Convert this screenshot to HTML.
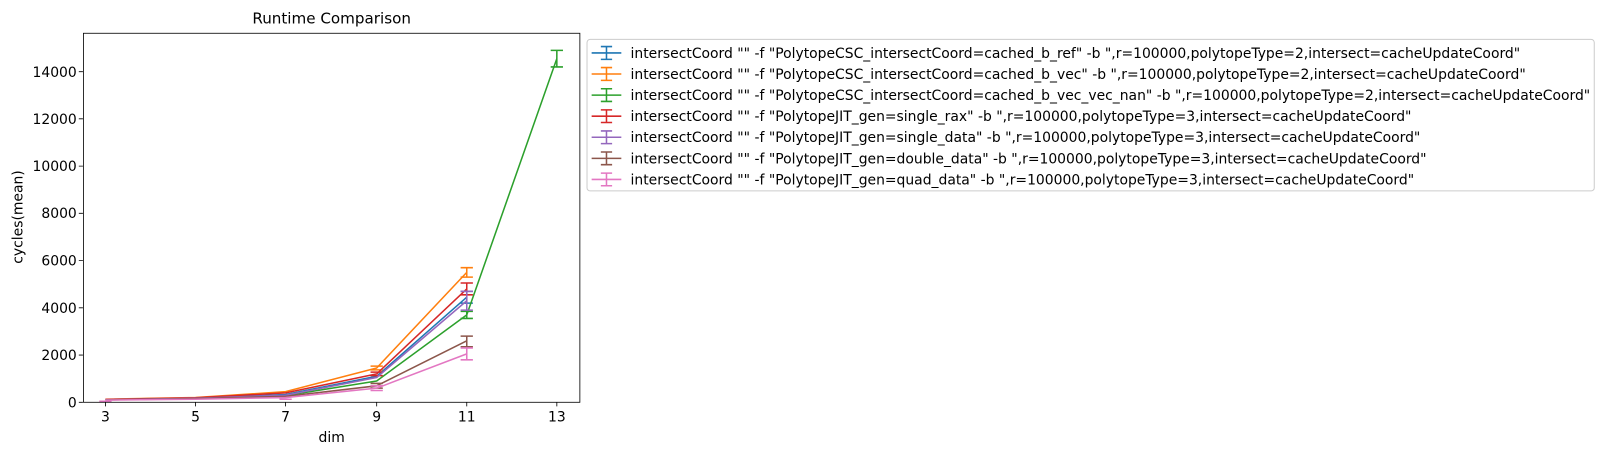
<!DOCTYPE html>
<html><head><meta charset="utf-8"><style>
html,body{margin:0;padding:0;background:#fff;}
svg{display:block;font-family:"DejaVu Sans","Liberation Sans",sans-serif;}
</style></head><body>
<svg width="1605" height="455" viewBox="0 0 1568 444.5" preserveAspectRatio="none" xmlns="http://www.w3.org/2000/svg">
<rect width="1568" height="444.5" fill="#fff"/>
<g fill="none" stroke-width="1.5" stroke-linejoin="round">
<polyline stroke="#1f77b4" points="103,390.2 191,388.8 279,385.4 368,367.6 456,290.3"/>
<path stroke="#1f77b4" d="M456,296.1V284.6M450,296.1H462M450,284.6H462"/>
<polyline stroke="#ff7f0e" points="103,390 191,388.4 279,382.6 368,359.5 456,266.1"/>
<path stroke="#ff7f0e" d="M456,270.7V261.5M450,270.7H462M450,261.5H462M362,361.3H374M362,357.7H374"/>
<polyline stroke="#2ca02c" points="103,390.5 191,389.5 279,386.5 368,372.2 456,307.6 544,57.3"/>
<path stroke="#2ca02c" d="M456,311.1V304.2M450,311.1H462M450,304.2H462M544,65.4V49.2M538,65.4H550M538,49.2H550"/>
<polyline stroke="#d62728" points="103,390.2 191,388.6 279,383.8 368,365.3 456,282.3"/>
<path stroke="#d62728" d="M456,288V276.5M450,288H462M450,276.5H462M362,367H374M362,363.5H374"/>
<polyline stroke="#9467bd" points="103,390.5 191,389.1 279,386.1 368,368.8 456,293.8"/>
<path stroke="#9467bd" d="M456,303V284.6M450,303H462M450,284.6H462"/>
<polyline stroke="#8c564b" points="103,390.7 191,389.5 279,387.2 368,376.9 456,333"/>
<path stroke="#8c564b" d="M456,338.8V328.4M450,338.8H462M450,328.4H462M362,379.2H374M362,374.6H374"/>
<polyline stroke="#e377c2" points="103,390.9 191,390 279,388.4 368,379.2 456,345.7"/>
<path stroke="#e377c2" d="M456,351.5V339.9M450,351.5H462M450,339.9H462M362,381.5H374M362,376.9H374M273,390H285M97,392H109"/>
</g>
<rect x="81.5" y="32.5" width="485" height="360.5" fill="none" stroke="#000" stroke-width="0.8"/>
<g stroke="#000" stroke-width="0.8">
<path d="M103,393V397M191,393V397M279,393V397M368,393V397M456,393V397M544,393V397"/>
<path d="M81,393H77M81,346.9H77M81,300.7H77M81,254.6H77M81,208.4H77M81,162.3H77M81,116.1H77M81,70H77"/>
</g>
<g font-size="13.6" fill="#000">
<g text-anchor="middle">
<text x="103" y="412">3</text><text x="191" y="412">5</text><text x="279" y="412">7</text>
<text x="368" y="412">9</text><text x="456" y="412">11</text><text x="544" y="412">13</text>
<text x="324" y="432">dim</text>
<text x="324" y="23" font-size="14.8">Runtime Comparison</text>
</g>
<g text-anchor="end">
<text x="75" y="398">0</text><text x="75" y="351.8">2000</text><text x="75" y="305.6">4000</text>
<text x="75" y="259.4">6000</text><text x="75" y="213.2">8000</text><text x="75" y="167">10000</text>
<text x="75" y="121">12000</text><text x="75" y="75">14000</text>
</g>
<text transform="translate(22,212) rotate(-90)" text-anchor="middle">cycles(mean)</text>
</g>
<rect x="573.5" y="38.5" width="984" height="148" rx="3" fill="#fff" stroke="#ccc" stroke-width="1"/>
<g stroke-width="1.5" fill="none">
<path stroke="#1f77b4" d="M578,51.7H607M592.5,45.5V58M587,45.5H598M587,58H598"/>
<path stroke="#ff7f0e" d="M578,72.3H607M592.5,66V78.5M587,66H598M587,78.5H598"/>
<path stroke="#2ca02c" d="M578,92.9H607M592.5,86.7V99.1M587,86.7H598M587,99.1H598"/>
<path stroke="#d62728" d="M578,113.5H607M592.5,107.3V119.7M587,107.3H598M587,119.7H598"/>
<path stroke="#9467bd" d="M578,134.1H607M592.5,127.9V140.3M587,127.9H598M587,140.3H598"/>
<path stroke="#8c564b" d="M578,154.7H607M592.5,148.5V160.9M587,148.5H598M587,160.9H598"/>
<path stroke="#e377c2" d="M578,175.3H607M592.5,169.1V181.5M587,169.1H598M587,181.5H598"/>
</g>
<g font-size="13.6" fill="#000">
<text x="616" y="56.5">intersectCoord "" -f "PolytopeCSC_intersectCoord=cached_b_ref" -b ",r=100000,polytopeType=2,intersect=cacheUpdateCoord"</text>
<text x="616" y="77.1">intersectCoord "" -f "PolytopeCSC_intersectCoord=cached_b_vec" -b ",r=100000,polytopeType=2,intersect=cacheUpdateCoord"</text>
<text x="616" y="97.7">intersectCoord "" -f "PolytopeCSC_intersectCoord=cached_b_vec_vec_nan" -b ",r=100000,polytopeType=2,intersect=cacheUpdateCoord"</text>
<text x="616" y="118.3">intersectCoord "" -f "PolytopeJIT_gen=single_rax" -b ",r=100000,polytopeType=3,intersect=cacheUpdateCoord"</text>
<text x="616" y="138.9">intersectCoord "" -f "PolytopeJIT_gen=single_data" -b ",r=100000,polytopeType=3,intersect=cacheUpdateCoord"</text>
<text x="616" y="159.5">intersectCoord "" -f "PolytopeJIT_gen=double_data" -b ",r=100000,polytopeType=3,intersect=cacheUpdateCoord"</text>
<text x="616" y="180.1">intersectCoord "" -f "PolytopeJIT_gen=quad_data" -b ",r=100000,polytopeType=3,intersect=cacheUpdateCoord"</text>
</g>
</svg>
</body></html>
